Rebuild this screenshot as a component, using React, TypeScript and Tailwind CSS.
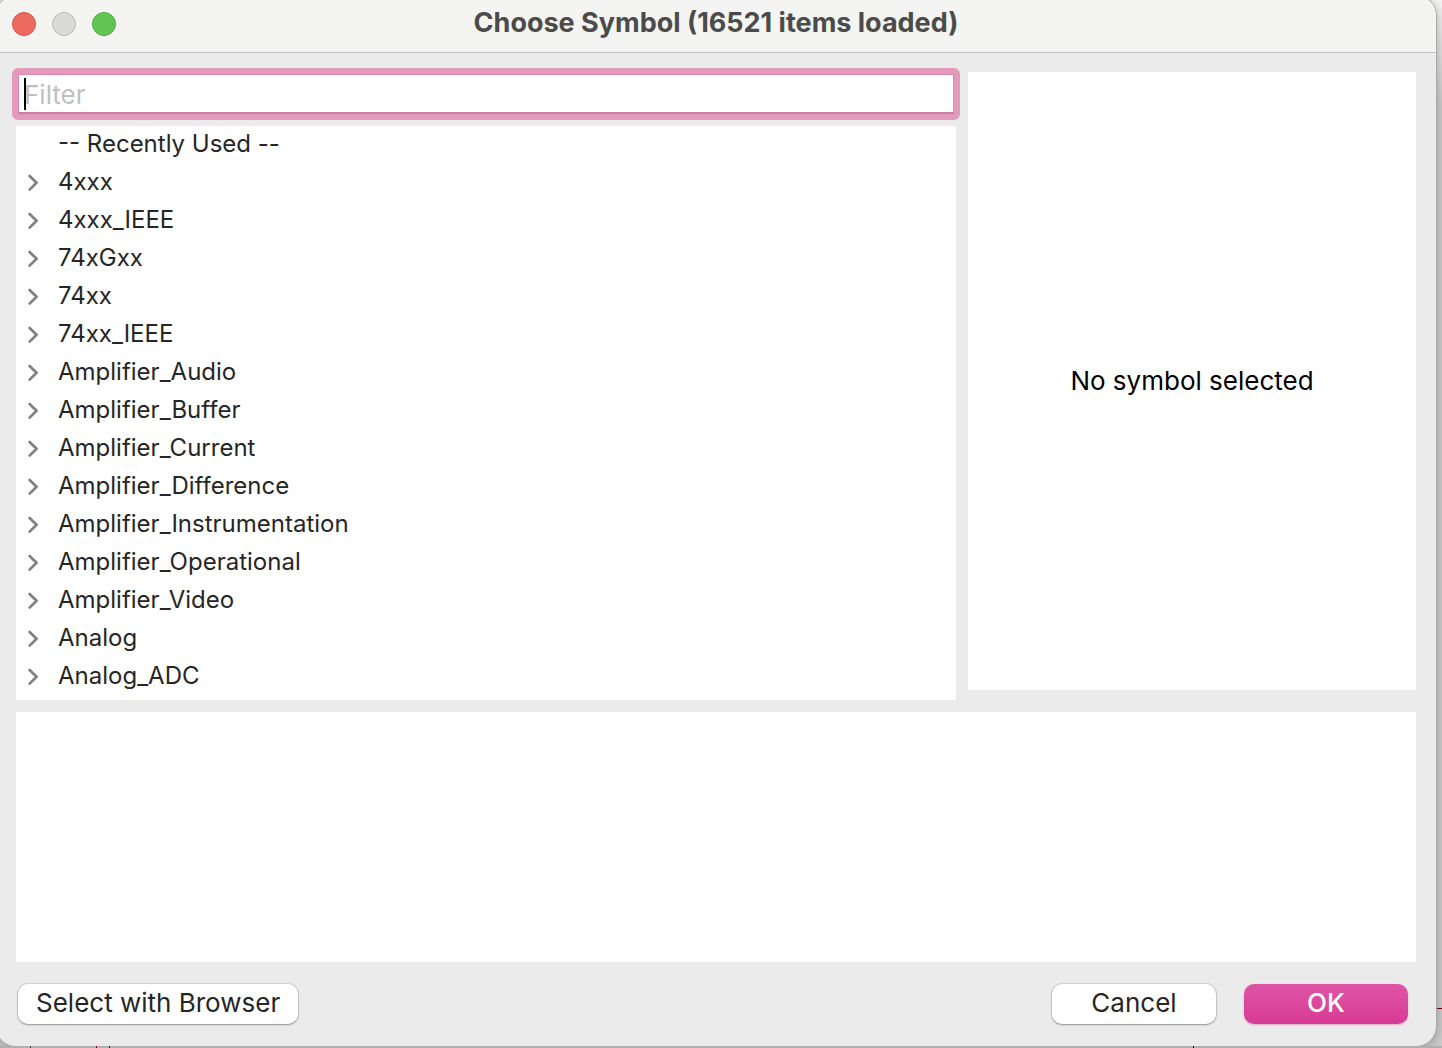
import { useState } from "react";

const libraries = [
  "4xxx",
  "4xxx_IEEE",
  "74xGxx",
  "74xx",
  "74xx_IEEE",
  "Amplifier_Audio",
  "Amplifier_Buffer",
  "Amplifier_Current",
  "Amplifier_Difference",
  "Amplifier_Instrumentation",
  "Amplifier_Operational",
  "Amplifier_Video",
  "Analog",
  "Analog_ADC",
];

function Chevron() {
  return (
    <svg
      className="h-5 w-3 shrink-0"
      viewBox="0 0 12 20"
      fill="none"
      stroke="#808080"
      strokeWidth="2.7"
      strokeLinecap="round"
      strokeLinejoin="round"
      aria-hidden="true"
    >
      <path d="M2.6 4 L9.6 10.8 L2.6 17.6" />
    </svg>
  );
}

function TitleBar() {
  return (
    <header className="grid h-[57px] shrink-0 grid-cols-[1fr_auto_1fr] items-center border-b border-[#c3c3c3] bg-[#f4f4f2] px-4">
      <div className="flex gap-4">
        <button aria-label="Close" className="size-6 rounded-full border border-[#d9564b] bg-[#ed6a5e]" />
        <button aria-label="Minimize" disabled className="size-6 rounded-full border border-[#bcbcbb] bg-[#dadad9]" />
        <button aria-label="Zoom" className="size-6 rounded-full border border-[#52ab43] bg-[#61c554]" />
      </div>
      <h1 className="pb-0.5 text-[27px] leading-8 font-bold text-[#4b4b4a]">Choose Symbol (16521 items loaded)</h1>
    </header>
  );
}

function FilterField() {
  const [value, setValue] = useState("");
  return (
    <div className="relative -mx-1 -mt-1 rounded-md border-6 border-[#e29abd] bg-white">
      <input
        type="text"
        aria-label="Filter"
        placeholder="Filter"
        value={value}
        onChange={(e) => setValue(e.target.value)}
        className="block h-10 w-full border border-b-2 border-[#dd87b0] border-b-[#c97fa3] bg-white pt-0.5 pl-[5px] text-[26px] text-[#262626] outline-none placeholder:text-[#bfbfbf]"
      />
      {value === "" && <span className="absolute top-1 left-1.5 h-8 w-0.5 bg-black" />}
    </div>
  );
}

function LibraryTree() {
  return (
    <ul className="flex-1 bg-white text-[24px] leading-9 text-[#262626]">
      <li className="pb-0.5 pl-[42px]">-- Recently Used --</li>
      {libraries.map((name) => (
        <li key={name}>
          <button className="flex w-full items-center gap-[19px] pb-0.5 pl-[11px] text-left">
            <Chevron />
            {name}
          </button>
        </li>
      ))}
    </ul>
  );
}

const pushButton = "h-10 rounded-[10px] pb-0.5 text-[26px] leading-8";
const plainButton =
  "bg-white text-[#262626] shadow-[0_0_1px_1px_rgba(0,0,0,0.1),0_1px_2px_rgba(0,0,0,0.3)]";

export default function App() {
  return (
    <div className="flex h-screen min-h-[600px] flex-col overflow-hidden bg-[#cbcbcb] bg-linear-to-b from-[#f4f4f4] via-[#cbcbcb] via-10% to-[#cbcbcb] font-['Inter',sans-serif]">
      <div className="relative flex min-h-0 flex-1">
        <main className="z-10 -mt-1 mr-1.5 -ml-1 flex flex-1 flex-col overflow-hidden rounded-[20px] bg-[#ebebeb] shadow-[0_0_0_1px_#a9a9a9,0_2px_12px_rgba(0,0,0,0.3)]">
          <TitleBar />
          <div className="flex min-h-0 flex-1 flex-col gap-3 pt-[19px] pr-5 pb-[22px] pl-5">
            <div className="grid flex-[628] grid-cols-[940fr_448fr] gap-3">
              <section className="flex flex-col gap-1.5">
                <FilterField />
                <LibraryTree />
              </section>
              <section className="mb-2.5 flex items-center justify-center bg-white pb-0.5 text-[26px] text-black">
                <p>No symbol selected</p>
              </section>
            </div>
            <section aria-label="Symbol details" className="flex-[250] bg-white" />
            <footer className="mt-2.5 flex justify-between pr-2 pl-0.5">
              <button className={`${pushButton} ${plainButton} px-[18px]`}>Select with Browser</button>
              <div className="flex gap-7">
                <button className={`${pushButton} ${plainButton} w-[164px]`}>Cancel</button>
                <button
                  className={`${pushButton} w-[164px] bg-linear-to-b from-[#dd55a6] to-[#d83993] font-medium text-white shadow-[0_1px_2px_rgba(216,57,147,0.4)]`}
                >
                  OK
                </button>
              </div>
            </footer>
          </div>
        </main>
        <span className="absolute right-0 bottom-[37px] h-px w-1.5 bg-[#7c0011]" />
      </div>
      <div className="relative z-20 h-0.5 shrink-0 bg-[#b0b0b0]">
        <span className="absolute left-[30px] h-0.5 w-px bg-[#444]" />
        <span className="absolute left-24 h-0.5 w-px bg-[#7c0011]" />
        <span className="absolute left-[109px] h-0.5 w-px bg-[#7c0011]" />
        <span className="absolute left-[1193px] h-0.5 w-px bg-[#3c0011]" />
      </div>
    </div>
  );
}
